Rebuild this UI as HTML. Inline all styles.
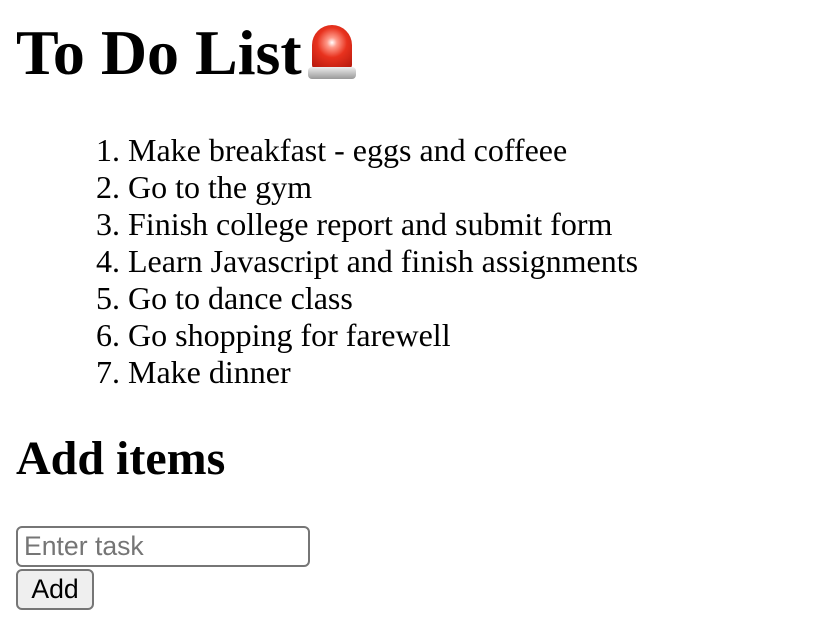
<!DOCTYPE html>
<html><head><meta charset="utf-8"><style>
html{zoom:2}
body{margin:8px;font-family:"Liberation Serif",serif;font-size:16px;background:#fff;color:#000}
h1{font-size:32px;margin:0;line-height:37px;display:flex;align-items:center}
.siren{display:inline-block;width:24px;height:30px;position:relative;margin-left:3px;top:-1px}
.siren .dome{position:absolute;left:2px;top:2px;width:20px;height:22px;border-radius:10px 10px 2px 2px;background:radial-gradient(circle at 50% 40%,#fff 0,#ff9a8a 15%,#e8321e 45%,#b0150a 100%)}
.siren .base{position:absolute;left:0;top:23px;width:24px;height:6px;border-radius:2px;background:linear-gradient(#eee,#999)}
ol{margin:21px 0 16px;padding-left:56px;line-height:18.5px}
h2{font-size:24px;margin:20px 0 19.5px;line-height:28px}
input{font-family:"Liberation Sans",sans-serif;font-size:13.3px;width:147px;height:20.5px;box-sizing:border-box;border:1px solid #767676;border-radius:3px;padding:1px 3px;margin:0;display:block}
input::placeholder{color:#757575}
button{font-family:"Liberation Sans",sans-serif;font-size:13.3px;height:20.5px;width:39px;padding:0 5px;border:1px solid #767676;border-radius:3px;background:#efefef;margin:1px 0 0;display:block}
</style></head><body>
<h1>To Do List<span class="siren"><span class="dome"></span><span class="base"></span></span></h1>
<ol>
<li>Make breakfast - eggs and coffeee</li>
<li>Go to the gym</li>
<li>Finish college report and submit form</li>
<li>Learn Javascript and finish assignments</li>
<li>Go to dance class</li>
<li>Go shopping for farewell</li>
<li>Make dinner</li>
</ol>
<h2>Add items</h2>
<input placeholder="Enter task">
<button>Add</button>
</body></html>
